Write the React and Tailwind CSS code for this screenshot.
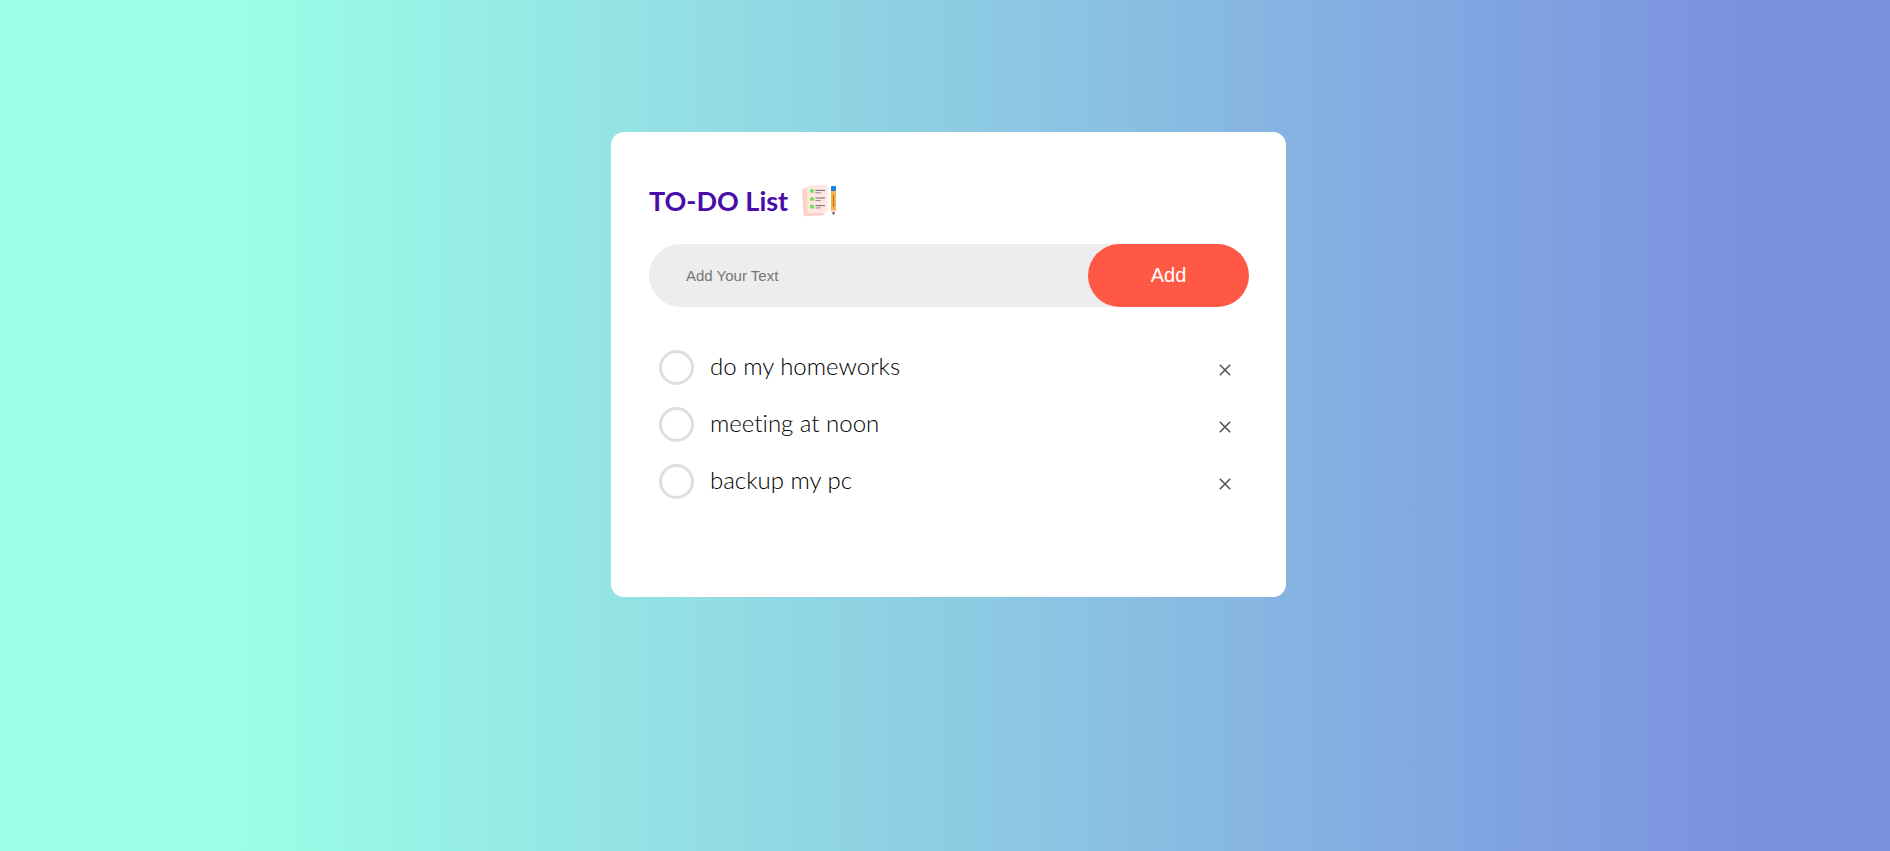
import { useState } from "react";

const initialTasks = [
  { id: 1, text: "do my homeworks", done: false },
  { id: 2, text: "meeting at noon", done: false },
  { id: 3, text: "backup my pc", done: false },
];

function ListIcon() {
  return (
    <svg className="size-[38px] shrink-0" viewBox="0 0 38 38" aria-hidden="true">
      <path d="M3.6 6.2 8 5.4V31l14.5-.6 2.6 1.4q-.2 1.2-1.6 1.4L5.2 34.2q-1.6 0-1.7-1.6L2 8.2q0-1.7 1.6-2z" fill="#fbd2c9" />
      <path d="M9 3.4 25.6 2.8q2 0 2.1 2V28q0 2-2 2.2L9.6 31.5q-2 0-2.1-2L7.2 5.4q0-1.9 1.8-2z" fill="#ffe7df" />
      <g fill="#5fe84e">
        <circle cx="12" cy="9" r="2.1" />
        <circle cx="12" cy="17" r="2.1" />
        <circle cx="12" cy="24.7" r="2.1" />
      </g>
      <g stroke="#7b6290" strokeWidth="1" strokeLinecap="round">
        <path d="M15.8 8.4H24.6M15.8 16H24.6M15.8 23.6H24.6" />
        <path d="M15.8 10.8h4.6M15.8 18.5h4.6M15.8 25.9h4.6" opacity=".75" />
      </g>
      <path d="M31 9h5v19.4h-5z" fill="#f9b14c" />
      <path d="M31 5.2Q31 4 32.2 4h2.6Q36 4 36 5.2V9h-5z" fill="#1283ec" />
      <path d="M31 28.4h5l-1.8 3.9q-.7 1-1.4 0z" fill="#f7c9bd" />
      <path d="m32.3 30.5.7 1.8q.5.8 1 0l.7-1.8z" fill="#3a2a4d" />
      <path d="M33.5 13.4v11" stroke="#a8713b" strokeWidth="1" strokeLinecap="round" />
    </svg>
  );
}

function Task({ task, onToggle, onRemove }) {
  return (
    <li className="flex h-[57px] items-center px-[10px]">
      <label className="flex grow cursor-pointer items-center gap-4 text-2xl leading-7 font-light text-black">
        <input
          type="checkbox"
          checked={task.done}
          onChange={onToggle}
          className="size-[35px] shrink-0 cursor-pointer appearance-none rounded-full border-[3px] border-[#dedede] bg-white checked:border-[#ff5945] checked:bg-[#ff5945]"
        />
        <span className={task.done ? "pb-1 text-[#555] line-through" : "pb-1"}>{task.text}</span>
      </label>
      <button
        type="button"
        aria-label={`Remove ${task.text}`}
        onClick={onRemove}
        className="grid size-7 cursor-pointer place-items-center pt-1 text-[#555]"
      >
        <svg className="size-3" viewBox="0 0 12 12" aria-hidden="true">
          <path d="m.8.8 10.4 10.4M11.2.8.8 11.2" stroke="currentColor" strokeWidth="1.6" />
        </svg>
      </button>
    </li>
  );
}

export default function App() {
  const [tasks, setTasks] = useState(initialTasks);
  const [draft, setDraft] = useState("");

  const addTask = (event) => {
    event.preventDefault();
    if (!draft.trim()) return;
    setTasks([...tasks, { id: Date.now(), text: draft.trim(), done: false }]);
    setDraft("");
  };

  return (
    <div className="min-h-screen bg-[linear-gradient(90deg,#9bffe6_12%,#8dcae3_52%,#7b92e0_92%)] pt-[132px] pb-8 pl-[7px] font-['Century_Gothic',Lato,sans-serif] [font-variant-ligatures:none]">
      <main className="mx-auto w-full max-w-[675px] rounded-[13px] bg-white pt-[50px] pr-[37px] pb-[87px] pl-[38px]">
        <h1 className="mb-6 flex items-center gap-3 text-[27px] leading-[38px] font-bold text-[#480ca8]">
          TO-DO List
          <ListIcon />
        </h1>
        <form onSubmit={addTask} className="mb-8 flex rounded-full bg-[#ecedef] font-['Liberation_Sans',Arial,sans-serif]">
          <input
            type="text"
            aria-label="Add Your Text"
            placeholder="Add Your Text"
            value={draft}
            onChange={(event) => setDraft(event.target.value)}
            className="h-[63px] min-w-0 grow bg-transparent pl-[37px] text-[15px] outline-none placeholder:text-[#757575]"
          />
          <button type="submit" className="w-[161px] shrink-0 cursor-pointer rounded-full bg-[#ff5945] pb-[2px] text-xl text-white">
            Add
          </button>
        </form>
        <ul>
          {tasks.map((task) => (
            <Task
              key={task.id}
              task={task}
              onToggle={() => setTasks(tasks.map((t) => (t.id === task.id ? { ...t, done: !t.done } : t)))}
              onRemove={() => setTasks(tasks.filter((t) => t.id !== task.id))}
            />
          ))}
        </ul>
      </main>
    </div>
  );
}
